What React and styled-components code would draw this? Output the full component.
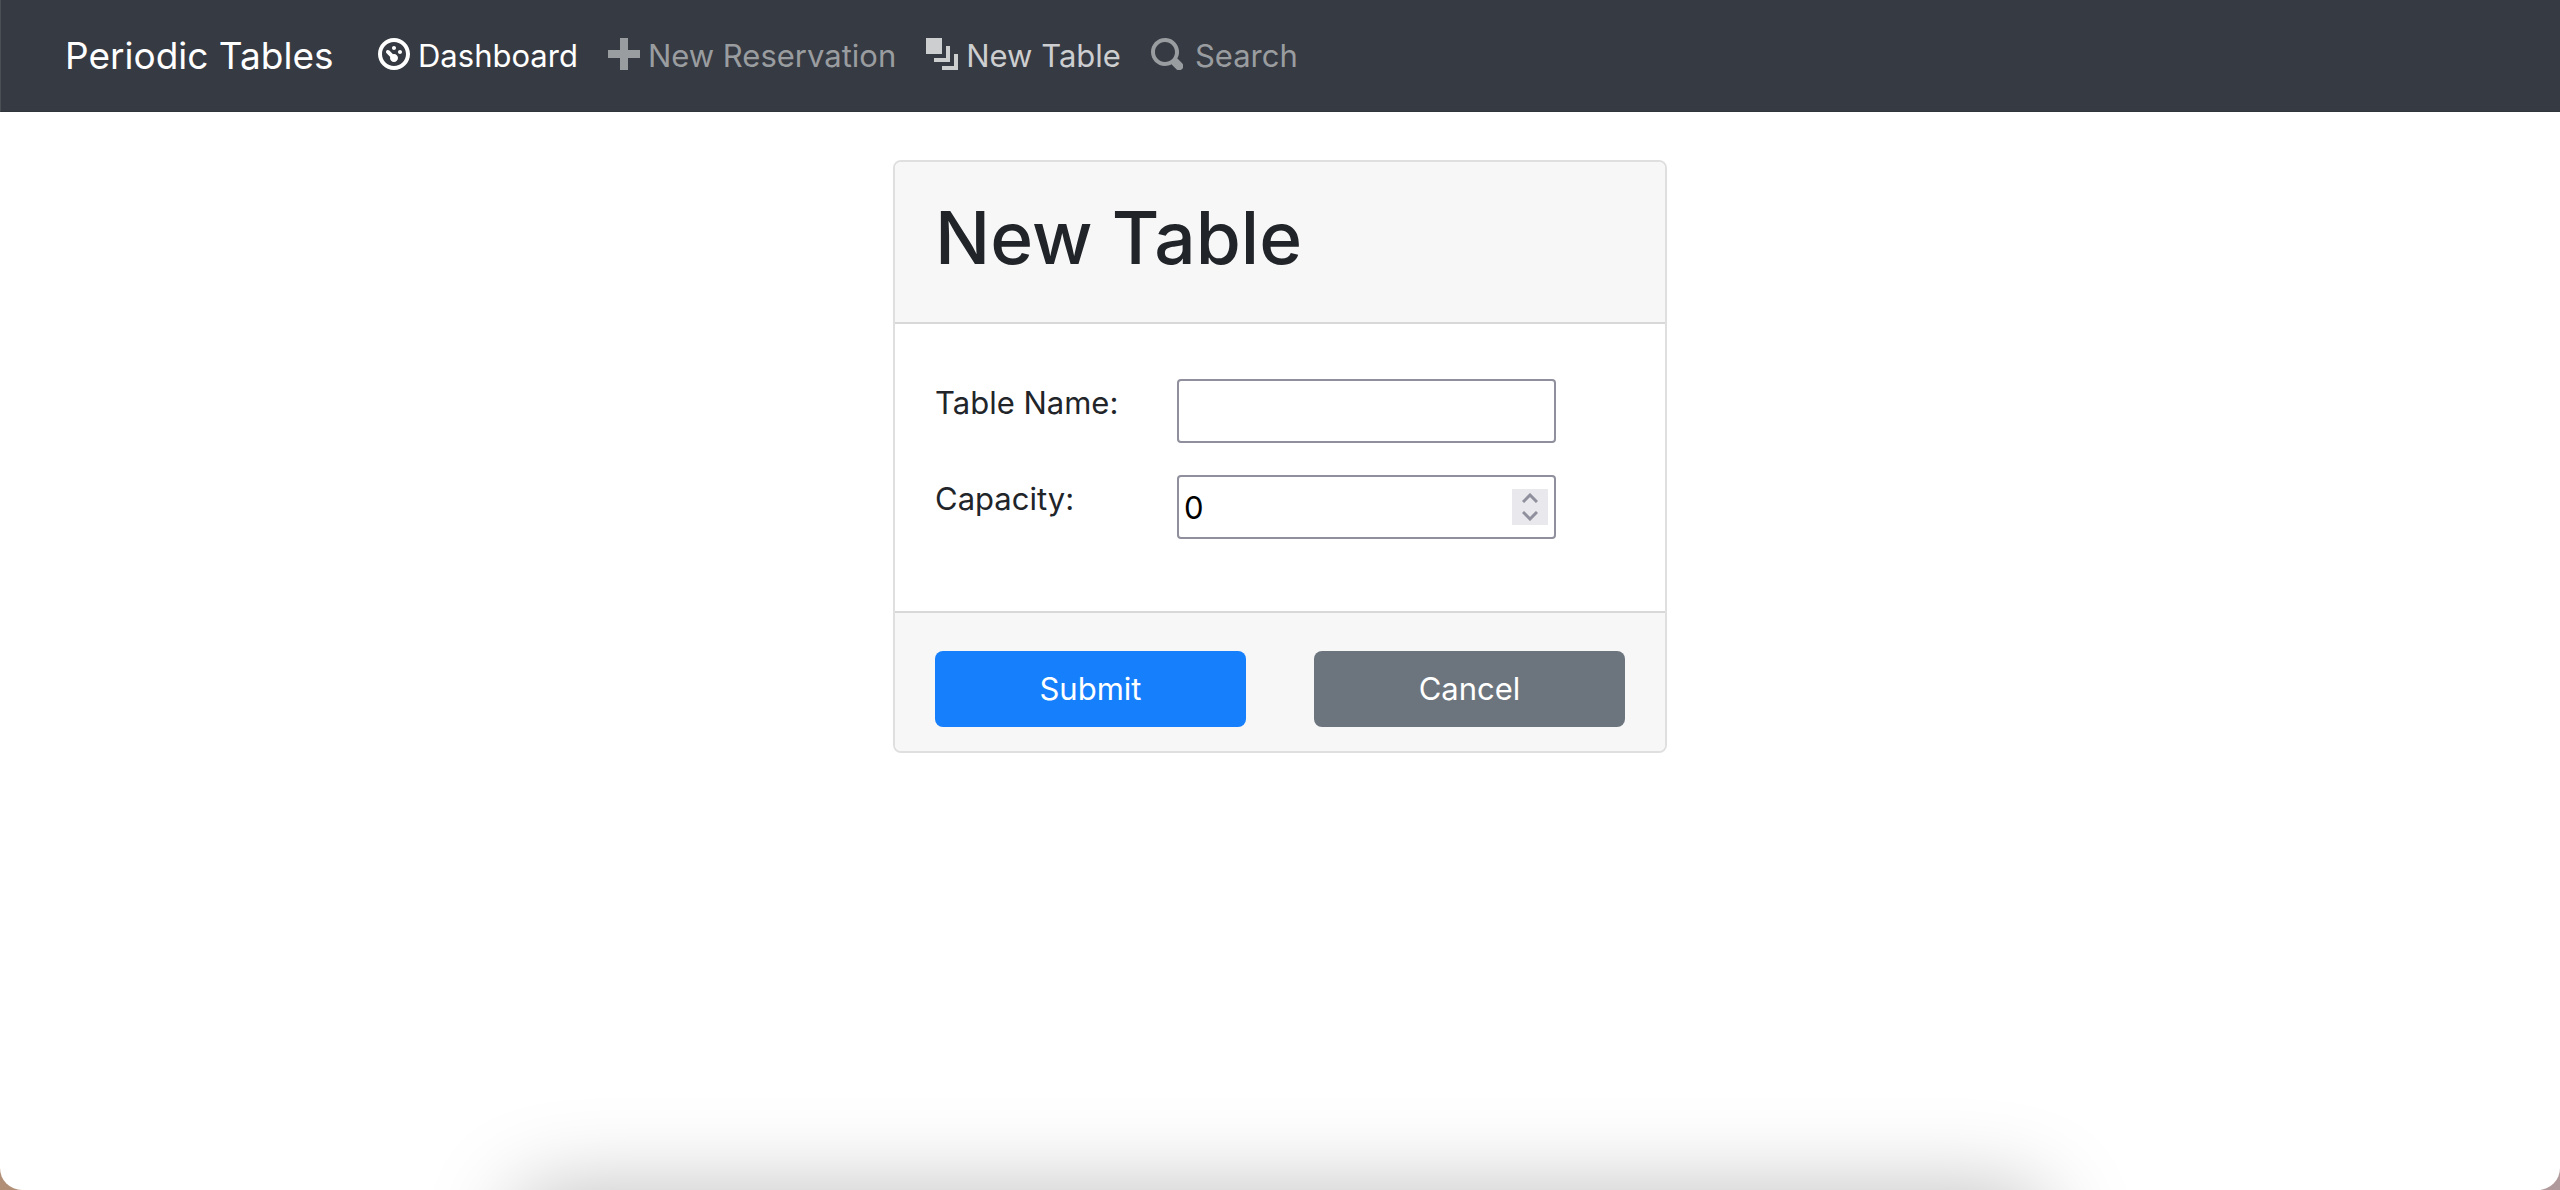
import React, { useState } from "react";
import styled, { createGlobalStyle } from "styled-components";

const GlobalStyle = createGlobalStyle`
  *, *::before, *::after { box-sizing: border-box; }
  body {
    margin: 0;
    background: linear-gradient(90deg, #b18f76, #b09a9c);
    font-family: Inter, "Liberation Sans", sans-serif;
    font-size: 31px;
    line-height: 48px;
    color: #212529;
  }
`;

const Page = styled.div`
  position: relative;
  min-height: 100vh;
  overflow: hidden;
  background: #fff;
  border-radius: 0 0 22px 22px;
`;

const Navbar = styled.nav`
  display: flex;
  align-items: center;
  height: 112px;
  padding: 0 64px;
  background: #363a42;
  border-left: 1px solid #4a4e55;
  border-bottom: 1px solid #30343b;
`;

const Brand = styled.a`
  width: 313px;
  font-size: 37px;
  color: #fff;
  text-decoration: none;
  white-space: nowrap;
`;

const NavList = styled.ul`
  display: flex;
  gap: 30px;
  margin: 0;
  padding: 0;
  list-style: none;
`;

const NavLink = styled.a`
  display: flex;
  align-items: center;
  gap: ${(p) => (p.$wide ? 12 : 8)}px;
  color: ${(p) => p.$color};
  text-decoration: none;
  white-space: nowrap;
`;

const Icon = styled.svg`
  width: 32px;
  height: 32px;
  margin-bottom: 4px;
  fill: currentColor;
`;

const Main = styled.main`
  padding: 48px 32px;
`;

const Card = styled.form`
  max-width: 774px;
  margin: 0 auto;
  border: 2px solid #dfdfdf;
  border-radius: 8px;
  overflow: hidden;
`;

const CardHeader = styled.header`
  padding: 28px 40px 36px;
  background: #f7f7f7;
  border-bottom: 2px solid #d8d8d8;
`;

const Title = styled.h1`
  margin: 0;
  font-size: 73px;
  line-height: 96px;
  font-weight: 500;
`;

const CardBody = styled.div`
  display: grid;
  gap: 32px;
  padding: 55px 40px 72px;
`;

const Field = styled.div`
  display: grid;
  grid-template-columns: 242px 379px;
  align-items: start;
`;

const Control = styled.div`
  position: relative;
  display: flex;
`;

const Input = styled.input`
  width: 100%;
  height: 64px;
  padding: 0 5px;
  border: 2px solid #8f8f9d;
  border-radius: 4px;
  background: #fff;
  color: #000;
  font: inherit;
  appearance: textfield;
  &::-webkit-inner-spin-button,
  &::-webkit-outer-spin-button {
    appearance: none;
    margin: 0;
  }
`;

const Stepper = styled.div`
  position: absolute;
  top: 14px;
  right: 8px;
  display: grid;
  grid-template-rows: 18px 18px;
  width: 36px;
  background: #e9e9ed;
`;

const StepButton = styled.button`
  display: flex;
  align-items: center;
  justify-content: center;
  padding: 0;
  border: 0;
  background: none;
  color: #8f8f9d;
`;

const Chevron = styled.svg`
  width: 16px;
  height: 10px;
  fill: none;
  stroke: currentColor;
  stroke-width: 3;
`;

const CardFooter = styled.footer`
  display: grid;
  grid-template-columns: 1fr 1fr;
  gap: 68px;
  padding: 38px 40px 24px;
  background: #f7f7f7;
  border-top: 2px solid #d8d8d8;
`;

const Button = styled.button`
  height: 76px;
  border: 0;
  border-radius: 8px;
  background: ${(p) => p.$bg};
  color: #fff;
  font: inherit;
`;

const DockShadow = styled.div`
  position: absolute;
  top: 100%;
  left: 20%;
  right: 20%;
  height: 100px;
  border-radius: 40px;
  box-shadow: 0 0 88px rgba(0, 0, 0, 0.26);
  pointer-events: none;
`;

const links = [
  {
    label: "Dashboard",
    color: "#ffffff",
    icon: "M4 0c-2.2 0-4 1.8-4 4s1.8 4 4 4 4-1.8 4-4-1.8-4-4-4zm0 1c1.66 0 3 1.34 3 3s-1.34 3-3 3-3-1.34-3-3 1.34-3 3-3zm0 1c-.28 0-.5.22-.5.5s.22.5.5.5.5-.22.5-.5-.22-.5-.5-.5zm-1.66 1a.5.5 0 0 0-.19.84l.91.91c-.02.08-.06.16-.06.25 0 .55.45 1 1 1s1-.45 1-1-.45-1-1-1c-.09 0-.17.04-.25.06l-.91-.91a.5.5 0 0 0-.44-.16.5.5 0 0 0-.06 0zm3.16 0c-.28 0-.5.22-.5.5s.22.5.5.5.5-.22.5-.5-.22-.5-.5-.5z",
  },
  {
    label: "New Reservation",
    color: "#9a9da0",
    icon: "M3 0v3h-3v2h3v3h2v-3h3v-2h-3v-3h-2z",
  },
  {
    label: "New Table",
    color: "#cdced0",
    icon: "M0 0v4h4v-4h-4zm5 2v3h-3v1h4v-4h-1zm2 2v3h-3v1h4v-4h-1z",
  },
  {
    label: "Search",
    color: "#9a9da0",
    wide: true,
    icon: "M3.5 0c-1.93 0-3.5 1.57-3.5 3.5s1.57 3.5 3.5 3.5c.59 0 1.17-.14 1.66-.41a1 1 0 0 0 .13.13l1 1a1.02 1.02 0 1 0 1.44-1.44l-1-1a1 1 0 0 0-.16-.13c.27-.49.44-1.06.44-1.66 0-1.93-1.55-3.5-3.5-3.5zm0 1c1.39 0 2.5 1.11 2.5 2.5 0 .66-.24 1.27-.66 1.72l-.03.03a1 1 0 0 0-.13.13c-.44.4-1.04.63-1.69.63-1.39 0-2.5-1.11-2.5-2.5s1.11-2.5 2.5-2.5z",
  },
];

export default function App() {
  const [name, setName] = useState("");
  const [capacity, setCapacity] = useState(0);
  const step = (by) => setCapacity((value) => Math.max(0, Number(value) + by));

  return (
    <Page>
      <GlobalStyle />
      <Navbar>
        <Brand href="#home">Periodic Tables</Brand>
        <NavList>
          {links.map(({ label, color, icon, wide }) => (
            <li key={label}>
              <NavLink href="#nav" $color={color} $wide={wide}>
                <Icon viewBox="0 0 8 8" aria-hidden="true">
                  <path d={icon} />
                </Icon>
                {label}
              </NavLink>
            </li>
          ))}
        </NavList>
      </Navbar>
      <Main>
        <Card onSubmit={(e) => e.preventDefault()}>
          <CardHeader>
            <Title>New Table</Title>
          </CardHeader>
          <CardBody>
            <Field>
              <label htmlFor="table-name">Table Name:</label>
              <Control>
                <Input
                  id="table-name"
                  type="text"
                  value={name}
                  onChange={(e) => setName(e.target.value)}
                />
              </Control>
            </Field>
            <Field>
              <label htmlFor="capacity">Capacity:</label>
              <Control>
                <Input
                  id="capacity"
                  type="number"
                  value={capacity}
                  onChange={(e) => setCapacity(e.target.value)}
                />
                <Stepper>
                  <StepButton type="button" aria-label="Increase" onClick={() => step(1)}>
                    <Chevron viewBox="0 0 16 10">
                      <path d="M1 9l7-7 7 7" />
                    </Chevron>
                  </StepButton>
                  <StepButton type="button" aria-label="Decrease" onClick={() => step(-1)}>
                    <Chevron viewBox="0 0 16 10">
                      <path d="M1 1l7 7 7-7" />
                    </Chevron>
                  </StepButton>
                </Stepper>
              </Control>
            </Field>
          </CardBody>
          <CardFooter>
            <Button type="submit" $bg="#167ffc">Submit</Button>
            <Button type="button" $bg="#6c757d">Cancel</Button>
          </CardFooter>
        </Card>
      </Main>
      <DockShadow />
    </Page>
  );
}
